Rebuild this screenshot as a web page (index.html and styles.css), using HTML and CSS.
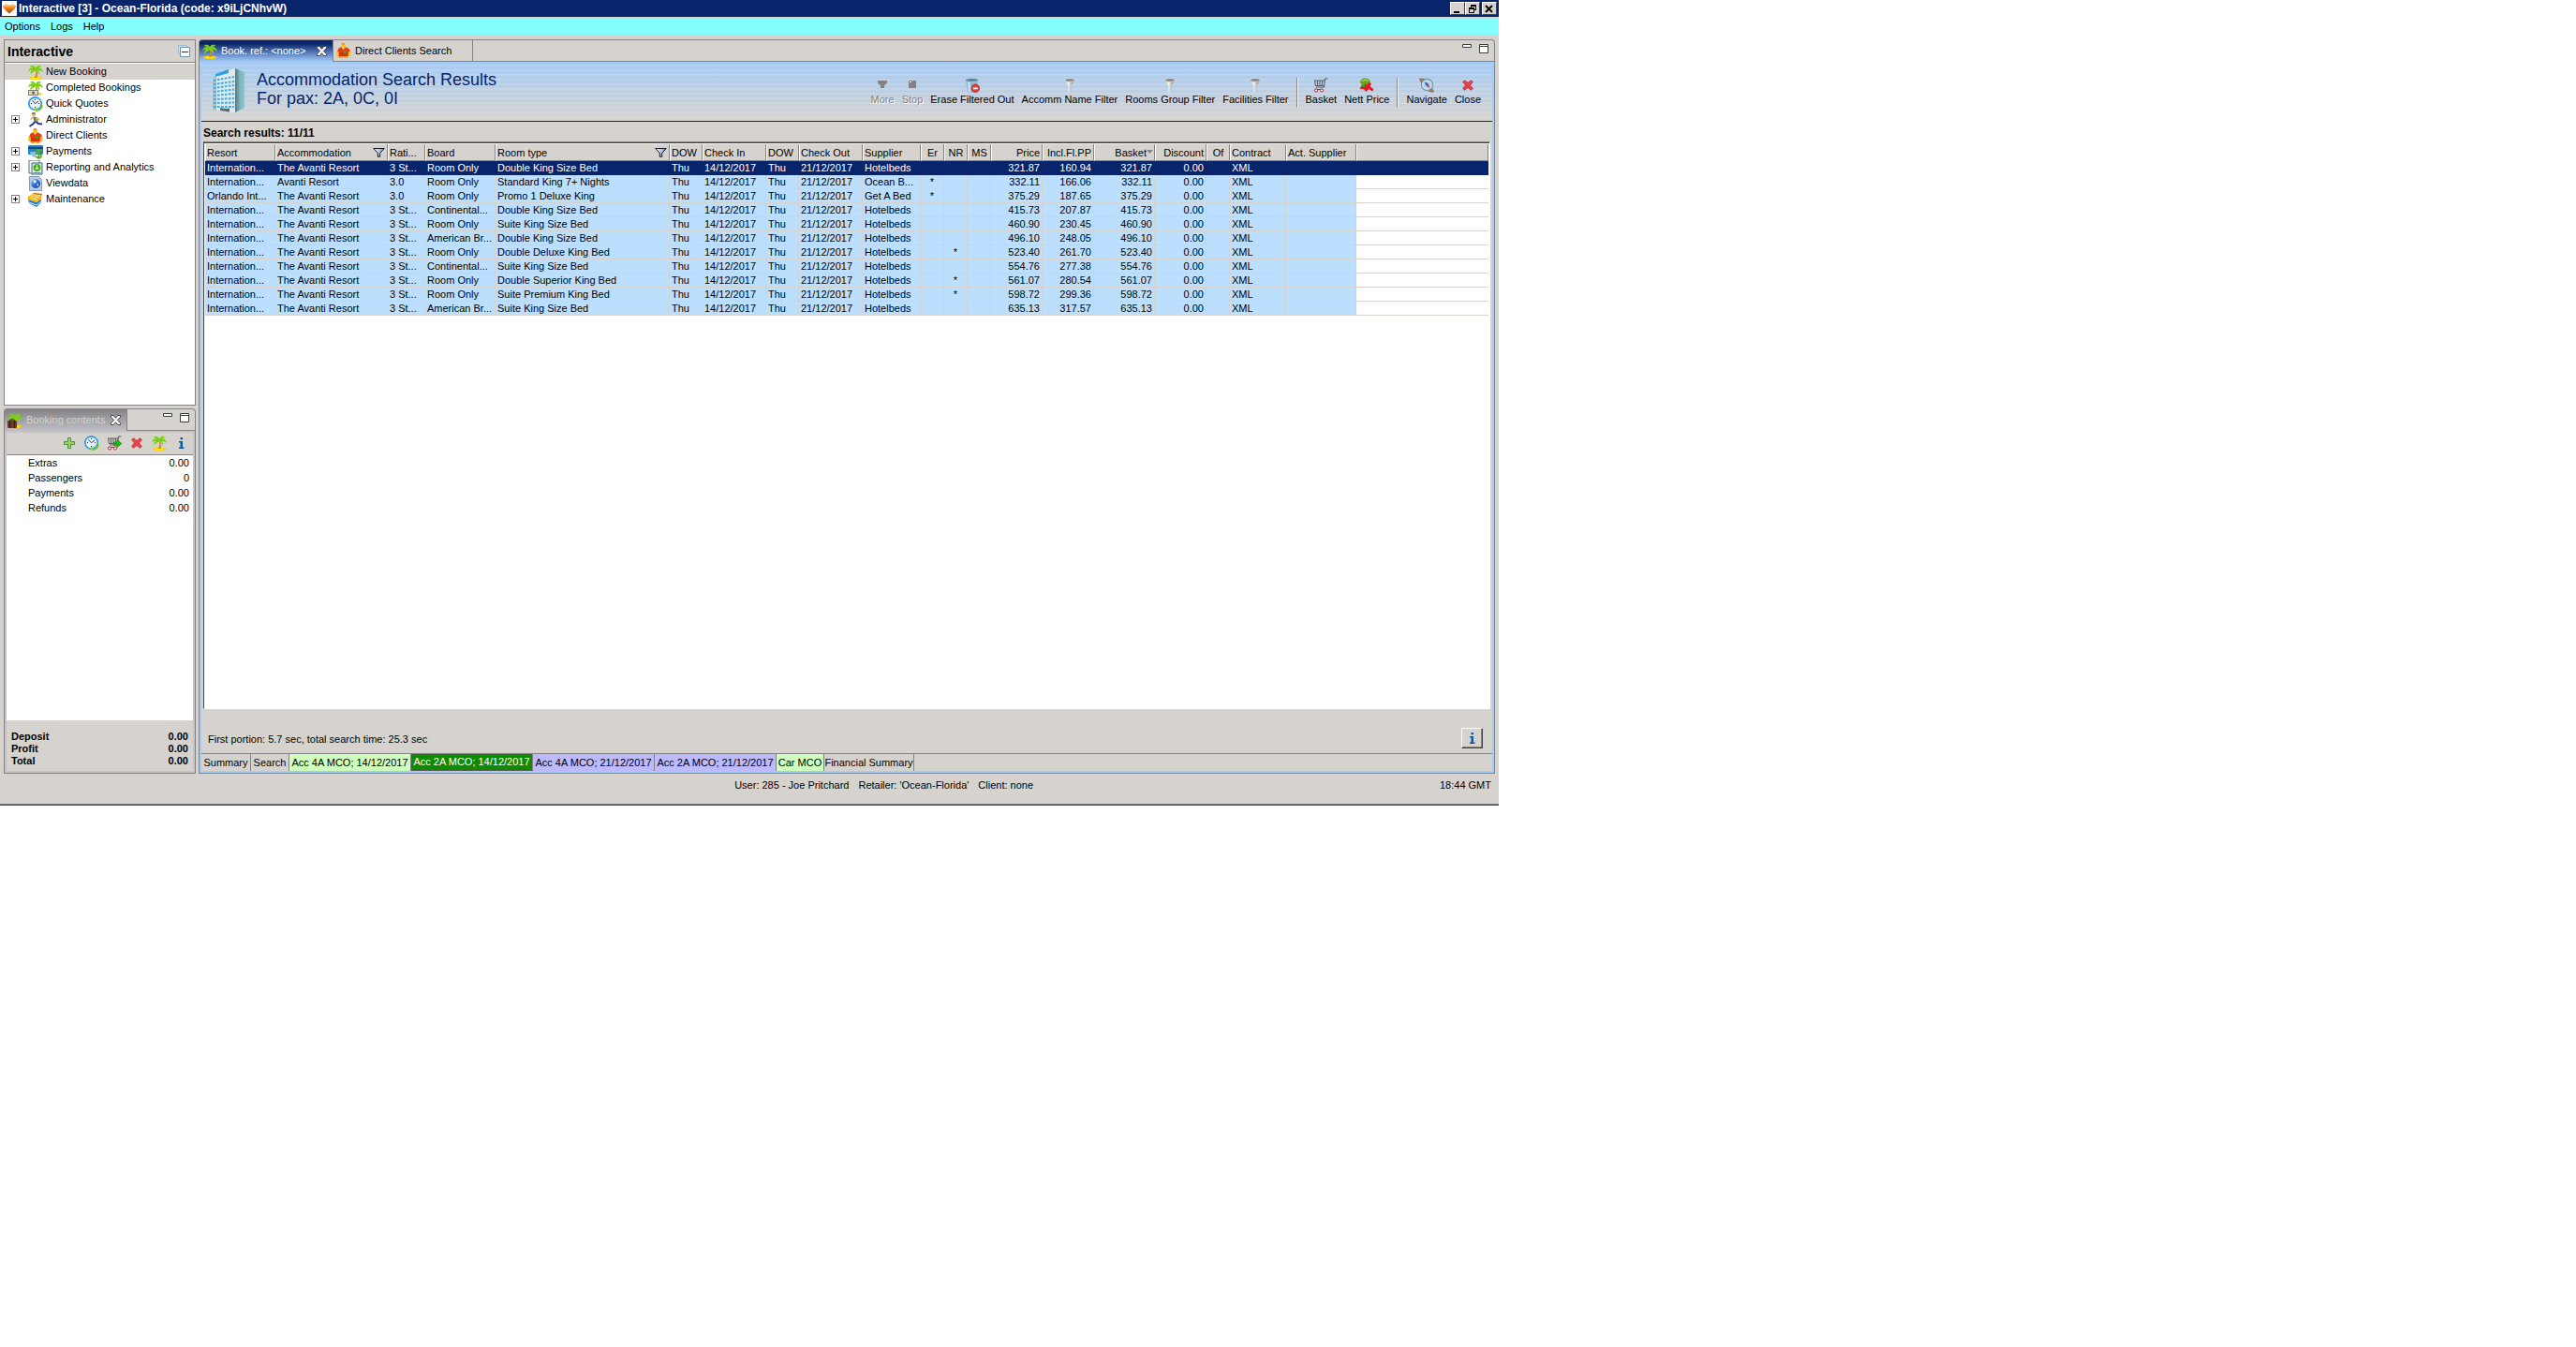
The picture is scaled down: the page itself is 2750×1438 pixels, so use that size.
FILE: index.html
```html
<!DOCTYPE html>
<html lang="en">
<head>
<meta charset="utf-8">
<title>Interactive [3] - Ocean-Florida</title>
<link rel="stylesheet" href="styles.css">
</head>
<body>
<svg class="defs" aria-hidden="true">
  <defs>
    <linearGradient id="gFunnel" x1="0" x2="1" y1="0" y2="0"><stop offset="0" stop-color="#b4b4b4"/><stop offset=".35" stop-color="#f6f6f6"/><stop offset="1" stop-color="#6b6b6b"/></linearGradient>
    <linearGradient id="gSide" x1="0" x2="1" y1="0" y2="0"><stop offset="0" stop-color="#4f7680"/><stop offset=".5" stop-color="#7fb4bd"/><stop offset="1" stop-color="#8fc4cc"/></linearGradient>
    <linearGradient id="gHead" x1="0" x2="1" y1="0" y2="0"><stop offset="0" stop-color="#fff"/><stop offset="1" stop-color="#6f8fc8"/></linearGradient>
    <linearGradient id="gHeart" x1="0" x2="0" y1="0" y2="1"><stop offset="0" stop-color="#ffd9a0"/><stop offset=".4" stop-color="#f08a1c"/><stop offset="1" stop-color="#a83c10"/></linearGradient>
    <linearGradient id="gGlobe" x1="0" x2="1" y1="0" y2="1"><stop offset="0" stop-color="#9ccdf8"/><stop offset=".5" stop-color="#2f6fd8"/><stop offset="1" stop-color="#0b2f8c"/></linearGradient>
  </defs>
  <symbol id="palm" viewBox="0 0 16 16">
    <ellipse cx="8" cy="14.200" rx="7" ry="1.800" fill="#f8d400"/><path d="M4 14h8v1H4z" fill="#ffee3a"/>
    <path d="M7.500 5c1 3 1 6-.5 9h2.500c.8-3 .4-6-.5-9z" fill="#c8901c"/>
    <path d="M8 3.500C6.500 0 3 0 1.500 2.500c2-.5 3-.2 3.500.8C2.500 3 .5 4.500 0 7.500c1.500-1.500 3-2 4-1.500C2.500 7 2 8.500 2.500 10.500 4 8.500 6 7 7.500 6.500c2 .5 3.500 2 4 4.500 1-2 .5-3.500-.5-5 1.500-.2 3.500.5 5 2C15.500 5 13.500 3.300 11 3.300c.8-1 2-1.300 3.500-.8C13 0 9.500 0 8 3.500z" fill="#86d81c"/>
    <path d="M7.500 4.500C6 3 4.500 2 3 2M7 5.200C5 4.400 3 4.800 1.200 6.200M9 4.500c1-1.500 2-2.200 4-2.500M9 5.200c2-.5 4 0 5.500 1.500M7.500 5.500L3.500 8.500" stroke="#4fa614" fill="none" stroke-width=".5"/>
  </symbol>
  <symbol id="palmcash" viewBox="0 0 16 16">
    <use href="#palm"/><rect x="0" y="10" width="11" height="6" fill="#7d8071"/><rect x="1" y="11" width="9" height="4" fill="#d8d8c4"/><circle cx="5.500" cy="13" r="1.600" fill="#63665a"/>
  </symbol>
  <symbol id="palmcase" viewBox="0 0 16 16">
    <use href="#palm"/><path d="M3 8.500V7h4v1.500" fill="none" stroke="#3b1d12"/><rect y="8" width="10" height="8" rx="1" fill="#6a3a28"/><rect x="2" y="8" width="1" height="8" fill="#341a10"/><rect x="7" y="8" width="1" height="8" fill="#341a10"/>
  </symbol>
  <symbol id="clock" viewBox="0 0 16 16">
    <circle cx="7.500" cy="7.500" r="6.700" fill="#e6f1f8" stroke="#2f9ae8" stroke-width="1.700"/><path d="M7.500 3v1M7.500 11v1M3 7.500h1M11 7.500h1M4.500 4.500l3 3.200L11 5" stroke="#333" fill="none"/>
    <path d="M7 15c4 0 7-2 7-6l1.700.3C16 13 12.500 16 8.500 16z" fill="#6cc218"/><path d="M6 14l3.500-3v5z" fill="#8ad42c"/>
  </symbol>
  <symbol id="runner" viewBox="0 0 16 16">
    <circle cx="6" cy="2.300" r="2" fill="#e8ba60"/><path d="M4 1.500C4 0 7.500-.2 8 1.500z" fill="#4a3a24"/><path d="M5 4.500l4 .5 1 5-3 1z" fill="#53688e"/><path d="M7.500 4.500L11 6l-.5 4-2.500-.5z" fill="#a1ae2d"/><path d="M5.500 5L2.500 7.500M9 6l3.500 2" stroke="#e0b060" stroke-width="1.400"/>
    <path d="M7.500 10L5 12.500 1.500 15M8.500 10l2.500 2 4 .5" stroke="#27368e" stroke-width="2" fill="none"/>
  </symbol>
  <symbol id="client" viewBox="0 0 16 16">
    <circle cx="7.500" cy="2.500" r="2.500" fill="#fbc81c"/><path d="M5.500 1.500h4L8.500 0h-2z" fill="#e8801c"/>
    <path d="M4 4.500h7l3 2 1 3v4H1v-4l1-3z" fill="#ee3a0c"/><path d="M2.500 9.500v5h10v-5z" fill="#e02c08"/>
    <path d="M0 9.500l2.500-.5.5 4-1.500 1L0 12.500zM15.500 9.500L13 9l-.5 4 1.500 1 1.500-1.500z" fill="#fbc41c"/><path d="M5.500 4.500L7.500 7l2-2.500z" fill="#ffe36b"/><path d="M7.500 8.500h3.500v2.500H7.500z" fill="#2fa82a"/><path d="M3 14h4v2H3zM8.500 14h4v2h-4z" fill="#f6a516"/>
  </symbol>
  <symbol id="card" viewBox="0 0 16 16">
    <rect y="1" width="16" height="10" rx="1" fill="#2185cd"/><rect y="3" width="16" height="2" fill="#10486f"/><path d="M2 8h6v5l-2 1-3-3z" fill="#8cc0e4"/><path d="M14 7.500C13 5.500 8.500 6 9 8.500S14 10 14 12.500 9 15 8 12.500M11.300 5v11" fill="none" stroke="#5daa16" stroke-width="1.800"/>
  </symbol>
  <symbol id="report" viewBox="0 0 16 16">
    <path d="M1 0h11v14H1z" fill="#f6fafc" stroke="#4c7389"/><path d="M4 3h11v12H4z" fill="#e0eef4" stroke="#37647e"/><circle cx="9.500" cy="8" r="4" fill="#4cae20"/><path d="M9.500 5v4M8 8l1.500 2L11 8" stroke="#fff" fill="none"/><path d="M5.500 13.500h8" stroke="#6b8797"/>
  </symbol>
  <symbol id="view" viewBox="0 0 16 16">
    <path d="M1.500.5h10l3 3v12h-13z" fill="#b6cbe4" stroke="#8a99b0"/><circle cx="8" cy="8" r="5" fill="url(#gGlobe)"/><path d="M5 5l3-1 1 2-2 2zM9 9l2-1v3z" fill="#e4f2ff"/>
  </symbol>
  <symbol id="books" viewBox="0 0 16 16">
    <path d="M0 8l9 3 5-4v4l-5 5-8-4z" fill="#1d7bc7"/><path d="M1 11l8 3 5-4" stroke="#d8efff" fill="none"/><path d="M0 5l6-4 9 1-1 6-5 3-9-3z" fill="#f6b21c"/><path d="M3 4l9 2M5 2.500l8 1.500M2 6l8 2.500" stroke="#fff0a0" fill="none"/><path d="M6 1l9 1-.4 1L5 2z" fill="#a86c10"/>
  </symbol>
  <symbol id="plus" viewBox="0 0 12 12"><path d="M4.500.5h3v4h4v3h-4v4h-3v-4h-4v-3h4z" fill="#9fcf62" stroke="#4a9246"/></symbol>
  <symbol id="cart" viewBox="0 0 16 16">
    <path d="M15.500 1h-3l-1 9H3M1 3h11M1.500 3l1 5.500H12M4.500 3v5M7 3v5M9.500 3v5" fill="none" stroke="#5d5f61" stroke-width="1.100"/><circle cx="3" cy="13.500" r="1.600" fill="#fff" stroke="#e81020"/><circle cx="9" cy="13.500" r="1.600" fill="#fff" stroke="#e81020"/><path d="M4 12.500h4" stroke="#e81020"/>
  </symbol>
  <symbol id="cartgo" viewBox="0 0 16 16"><use href="#cart"/><path d="M7.500 7H11V4.500L15.800 8.500 11 12.500V10H7.500z" fill="#12c21a" stroke="#067e0a" stroke-width=".7"/></symbol>
  <symbol id="redx" viewBox="0 0 12 12"><path d="M.7 2.500L2.500.7 6 3.500 9.500.7l1.800 1.800L8.500 6l2.800 3.500-1.800 1.800L6 8.500l-3.500 2.800L.7 9.500 3.500 6z" fill="#e8414b" stroke="#c42b35" stroke-width=".8"/></symbol>
  <symbol id="tabx" viewBox="0 0 11 11"><path d="M.5.5h2.700l2.300 2.800L7.800.5h2.700v1.700L7.400 5.500l3.100 3.300v1.700H7.800L5.500 7.700 3.200 10.500H.5V8.800l3.100-3.300L.5 2.200z" fill="#fff" stroke="#444"/></symbol>
  <symbol id="info" viewBox="0 0 8 12"><path d="M2.500 0H5v2.200H2.500zM1 4h4v6.500h1.500V12H1v-1.500h1.500V5.500H1z" fill="#0a5aa4"/></symbol>
  <symbol id="funnel" viewBox="0 0 16 16"><path d="M2.500 2.500L6.500 8.500v7l3-1.500V8.500l4-6z" fill="url(#gFunnel)"/><ellipse cx="8" cy="2.500" rx="5.500" ry="2" fill="#8b8b8b" stroke="#e4e4e4" stroke-width=".8"/></symbol>
  <symbol id="hfunnel" viewBox="0 0 13 10"><path d="M.8.500h11.400L7.700 5.500v3.800H5.300V5.500z" fill="url(#gHead)" stroke="#10151f"/></symbol>
  <symbol id="bin" viewBox="0 0 16 16"><path d="M1 2.500h13l-1 13H3z" fill="#8fb9d2"/><path d="M3 4l1 11h2L5.500 4z" fill="#cfe5f0"/><ellipse cx="7.500" cy="2.500" rx="7" ry="2" fill="#5d8199" stroke="#a9cde0"/><circle cx="11.300" cy="11.300" r="4.300" fill="#df3a3f" stroke="#b01f26" stroke-width=".7"/><path d="M8.800 10.500h5v1.800h-5z" fill="#fff"/></symbol>
  <symbol id="nett" viewBox="0 0 16 16"><ellipse cx="6.500" cy="4.500" rx="5.500" ry="4" fill="#6aa51e"/><path d="M3 4c1.500-2 5-2 6.500-.5" stroke="#c4e48a" fill="none"/><path d="M2 8h8v3H2z" fill="#4b8a12"/><path d="M5.500 5.500L8 8l3-3 2 1.500L11.500 9l4 3.500-1.500 2-3.500-2.500L7 15l-2-3H1v-2h5.500z" fill="#ee1226"/></symbol>
  <symbol id="compass" viewBox="0 0 16 16"><path d="M.5 1l5 .5-3 4zM15.500 15l-5-.5 3-3.500z" fill="#b0843c" stroke="#5b4520" stroke-width=".6"/><circle cx="8.500" cy="7.500" r="6" fill="#dcecf8" stroke="#7e96a8" stroke-width="1.400"/><circle cx="8.500" cy="7.500" r="4" fill="#9cd4f4"/><path d="M5.500 4l4 2.500L8 8.500z" fill="#1450b0"/><path d="M11.500 11l-4-2.500L9.500 6.500z" fill="#d82828"/></symbol>
  <symbol id="hotel" viewBox="0 0 34 48">
    <path d="M24 0l10 4v38l-10 5z" fill="url(#gSide)"/><path d="M24 0L4 6 0 11v33l24 3z" fill="#dfe8ea"/><path d="M0 11L4 6v39l-4-.5z" fill="#b3c1c6"/><path d="M3 6l14-5v4L3 9z" fill="#27a4e4"/>
    <path d="M1 13l22-4M1 17l22-3M1 21l22-3M1 25l22-2.500M1 29l22-2M1 33l22-1M1 37l22-.5M1 41h22" stroke="#3fa9dc" stroke-width="2" stroke-dasharray="2.600 1.400"/>
    <path d="M8 42l6 1 4-.5v4L8 45z" fill="#5d6a70"/>
  </symbol>
  <symbol id="logo" viewBox="0 0 16 16"><rect width="16" height="16" fill="#fff"/><path d="M1 5.500L4 3l4 1.500L12 3l3 2.500c0 2-2 4-7 8-5-4-7-6-7-8z" fill="url(#gHeart)"/></symbol>
  <symbol id="minw" viewBox="0 0 10 4"><path d="M.5.500h9v3h-9z" fill="#fff" stroke="#3c3c3c"/></symbol>
  <symbol id="maxw" viewBox="0 0 10 10"><path d="M.5.500h9v9h-9zM.5 2.500h9" fill="#fff" stroke="#3c3c3c"/></symbol>
</svg>

<div class="app">
  <header class="titlebar">
    <svg class="i16"><use href="#logo"/></svg>
    <h1>Interactive [3] - Ocean-Florida (code: x9iLjCNhvW)</h1>
    <div class="winbtns">
      <button aria-label="Minimise"><svg viewBox="0 0 10 9"><path d="M1 7h6v2H1z"/></svg></button>
      <button aria-label="Restore"><svg viewBox="0 0 10 9"><path d="M3 0h6v6H7V5h1V2H4v1H3zM1 3h6v6H1zM2 5v3h4V5z" fill-rule="evenodd"/></svg></button>
      <button class="closew" aria-label="Close window"><svg viewBox="0 0 10 9"><path d="M1 1l7 7M8 1L1 8" stroke="#000" stroke-width="2"/></svg></button>
    </div>
  </header>
  <nav class="menubar"><button>Options</button><button>Logs</button><button>Help</button></nav>

  <div class="workspace">
    <aside class="side">
      <section class="nav">
        <div class="navhead"><h2>Interactive</h2><button aria-label="Collapse all"><svg viewBox="0 0 13 13"><path d="M.5.500h9v9h-9z" fill="#d9e6f2" stroke="#9db8cf"/><path d="M2.500 2.500h10v10h-10z" fill="#fff" stroke="#7390a8"/><path d="M4 7h7v1H4z" fill="#0a3c78"/></svg></button></div>
        <ul class="tree">
          <li class="on"><span></span><svg class="i16"><use href="#palm"/></svg><a href="#new">New Booking</a></li>
          <li><span></span><svg class="i16"><use href="#palmcash"/></svg><a href="#completed">Completed Bookings</a></li>
          <li><span></span><svg class="i16"><use href="#clock"/></svg><a href="#quotes">Quick Quotes</a></li>
          <li><button class="exp" aria-label="Expand Administrator"></button><svg class="i16"><use href="#runner"/></svg><a href="#admin">Administrator</a></li>
          <li><span></span><svg class="i16"><use href="#client"/></svg><a href="#clients">Direct Clients</a></li>
          <li><button class="exp" aria-label="Expand Payments"></button><svg class="i16"><use href="#card"/></svg><a href="#payments">Payments</a></li>
          <li><button class="exp" aria-label="Expand Reporting"></button><svg class="i16"><use href="#report"/></svg><a href="#reports">Reporting and Analytics</a></li>
          <li><span></span><svg class="i16"><use href="#view"/></svg><a href="#viewdata">Viewdata</a></li>
          <li><button class="exp" aria-label="Expand Maintenance"></button><svg class="i16"><use href="#books"/></svg><a href="#maintenance">Maintenance</a></li>
        </ul>
      </section>

      <section class="booking">
        <div class="tabrow">
          <div class="tab on"><svg class="i16"><use href="#palmcase"/></svg><span>Booking contents</span><button aria-label="Close tab"><svg class="i11"><use href="#tabx"/></svg></button></div>
          <div class="tabrest"><button aria-label="Minimise panel"><svg class="minw"><use href="#minw"/></svg></button><button aria-label="Maximise panel"><svg class="maxw"><use href="#maxw"/></svg></button></div>
        </div>
        <div class="frame">
          <div class="tools">
            <button aria-label="Add"><svg class="i12"><use href="#plus"/></svg></button>
            <button aria-label="Quote"><svg class="i16"><use href="#clock"/></svg></button>
            <button aria-label="To basket"><svg class="i16"><use href="#cartgo"/></svg></button>
            <button aria-label="Delete"><svg class="i12"><use href="#redx"/></svg></button>
            <button aria-label="New booking"><svg class="i16"><use href="#palm"/></svg></button>
            <button aria-label="Information"><svg class="info"><use href="#info"/></svg></button>
          </div>
          <dl class="contents">
            <div><dt>Extras</dt><dd>0.00</dd></div>
            <div><dt>Passengers</dt><dd>0</dd></div>
            <div><dt>Payments</dt><dd>0.00</dd></div>
            <div><dt>Refunds</dt><dd>0.00</dd></div>
          </dl>
          <dl class="totals">
            <div><dt>Deposit</dt><dd>0.00</dd></div>
            <div><dt>Profit</dt><dd>0.00</dd></div>
            <div><dt>Total</dt><dd>0.00</dd></div>
          </dl>
        </div>
      </section>
    </aside>

    <main class="editor">
      <div class="tabrow">
        <div class="tab on"><svg class="i16"><use href="#palm"/></svg><span>Book. ref.: &lt;none&gt;</span><button aria-label="Close tab"><svg class="i11"><use href="#tabx"/></svg></button></div>
        <div class="tab second"><svg class="i16"><use href="#client"/></svg><span>Direct Clients Search</span></div>
        <div class="tabrest"><button aria-label="Minimise editor"><svg class="minw"><use href="#minw"/></svg></button><button aria-label="Maximise editor"><svg class="maxw"><use href="#maxw"/></svg></button></div>
      </div>
      <div class="frame">
        <div class="banner">
          <svg class="hotel"><use href="#hotel"/></svg>
          <h2>Accommodation Search Results<br>For pax: 2A, 0C, 0I</h2>
          <div class="actions">
            <button disabled><svg class="i16" viewBox="0 0 16 16"><path d="M3 3h10v3l-3 2v3H6V8L3 6z" fill="#848284"/></svg>More</button>
            <button disabled><svg class="i16" viewBox="0 0 16 16"><path d="M4 3h8v8H4z" fill="#848284"/><path d="M5 4h2v1H5z" fill="#fff"/></svg>Stop</button>
            <button><svg class="i16"><use href="#bin"/></svg>Erase Filtered Out</button>
            <button><svg class="i16"><use href="#funnel"/></svg>Accomm Name Filter</button>
            <button><svg class="i16"><use href="#funnel"/></svg>Rooms Group Filter</button>
            <button><svg class="i16"><use href="#funnel"/></svg>Facilities Filter</button>
            <i></i>
            <button><svg class="i16"><use href="#cart"/></svg>Basket</button>
            <button><svg class="i16"><use href="#nett"/></svg>Nett Price</button>
            <i></i>
            <button><svg class="i16"><use href="#compass"/></svg>Navigate</button>
            <button><svg class="i16" viewBox="-2 -2 16 16"><use href="#redx" width="12" height="12"/></svg>Close</button>
          </div>
        </div>
        <h3 class="count">Search results: 11/11</h3>
        <div class="grid">
          <table>
            <colgroup><col class="w75"><col class="w120"><col class="w40"><col class="w75"><col class="w186"><col class="w35"><col class="w68"><col class="w35"><col class="w68"><col class="w62"><col class="w25"><col class="w25"><col class="w25"><col class="w55"><col class="w55"><col class="w65"><col class="w55"><col class="w25"><col class="w60"><col class="w75"><col></colgroup>
            <thead><tr><th>Resort</th><th><span class="filt">Accommodation<svg><use href="#hfunnel"/></svg></span></th><th>Rati...</th><th>Board</th><th><span class="filt">Room type<svg><use href="#hfunnel"/></svg></span></th><th>DOW</th><th>Check In</th><th>DOW</th><th>Check Out</th><th>Supplier</th><th class="c">Er</th><th class="c">NR</th><th class="c">MS</th><th class="r">Price</th><th class="r">Incl.Fl.PP</th><th class="r sort">Basket<svg viewBox="0 0 7 4"><path d="M0 0h7L3.500 4z" fill="#848284"/></svg></th><th class="r">Discount</th><th class="c">Of</th><th>Contract</th><th>Act. Supplier</th><th></th></tr></thead>
            <tbody>
              <tr class="sel"><td>Internation...</td><td>The Avanti Resort</td><td>3 St...</td><td>Room Only</td><td>Double King Size Bed</td><td>Thu</td><td>14/12/2017</td><td>Thu</td><td>21/12/2017</td><td>Hotelbeds</td><td class="c"></td><td class="c"></td><td></td><td class="r">321.87</td><td class="r">160.94</td><td class="r">321.87</td><td class="r">0.00</td><td></td><td>XML</td><td></td><td></td></tr>
              <tr><td>Internation...</td><td>Avanti Resort</td><td>3.0</td><td>Room Only</td><td>Standard King 7+ Nights</td><td>Thu</td><td>14/12/2017</td><td>Thu</td><td>21/12/2017</td><td>Ocean B...</td><td class="c">*</td><td class="c"></td><td></td><td class="r">332.11</td><td class="r">166.06</td><td class="r">332.11</td><td class="r">0.00</td><td></td><td>XML</td><td></td><td></td></tr>
              <tr><td>Orlando Int...</td><td>The Avanti Resort</td><td>3.0</td><td>Room Only</td><td>Promo 1 Deluxe King</td><td>Thu</td><td>14/12/2017</td><td>Thu</td><td>21/12/2017</td><td>Get A Bed</td><td class="c">*</td><td class="c"></td><td></td><td class="r">375.29</td><td class="r">187.65</td><td class="r">375.29</td><td class="r">0.00</td><td></td><td>XML</td><td></td><td></td></tr>
              <tr><td>Internation...</td><td>The Avanti Resort</td><td>3 St...</td><td>Continental...</td><td>Double King Size Bed</td><td>Thu</td><td>14/12/2017</td><td>Thu</td><td>21/12/2017</td><td>Hotelbeds</td><td class="c"></td><td class="c"></td><td></td><td class="r">415.73</td><td class="r">207.87</td><td class="r">415.73</td><td class="r">0.00</td><td></td><td>XML</td><td></td><td></td></tr>
              <tr><td>Internation...</td><td>The Avanti Resort</td><td>3 St...</td><td>Room Only</td><td>Suite King Size Bed</td><td>Thu</td><td>14/12/2017</td><td>Thu</td><td>21/12/2017</td><td>Hotelbeds</td><td class="c"></td><td class="c"></td><td></td><td class="r">460.90</td><td class="r">230.45</td><td class="r">460.90</td><td class="r">0.00</td><td></td><td>XML</td><td></td><td></td></tr>
              <tr><td>Internation...</td><td>The Avanti Resort</td><td>3 St...</td><td>American Br...</td><td>Double King Size Bed</td><td>Thu</td><td>14/12/2017</td><td>Thu</td><td>21/12/2017</td><td>Hotelbeds</td><td class="c"></td><td class="c"></td><td></td><td class="r">496.10</td><td class="r">248.05</td><td class="r">496.10</td><td class="r">0.00</td><td></td><td>XML</td><td></td><td></td></tr>
              <tr><td>Internation...</td><td>The Avanti Resort</td><td>3 St...</td><td>Room Only</td><td>Double Deluxe King Bed</td><td>Thu</td><td>14/12/2017</td><td>Thu</td><td>21/12/2017</td><td>Hotelbeds</td><td class="c"></td><td class="c">*</td><td></td><td class="r">523.40</td><td class="r">261.70</td><td class="r">523.40</td><td class="r">0.00</td><td></td><td>XML</td><td></td><td></td></tr>
              <tr><td>Internation...</td><td>The Avanti Resort</td><td>3 St...</td><td>Continental...</td><td>Suite King Size Bed</td><td>Thu</td><td>14/12/2017</td><td>Thu</td><td>21/12/2017</td><td>Hotelbeds</td><td class="c"></td><td class="c"></td><td></td><td class="r">554.76</td><td class="r">277.38</td><td class="r">554.76</td><td class="r">0.00</td><td></td><td>XML</td><td></td><td></td></tr>
              <tr><td>Internation...</td><td>The Avanti Resort</td><td>3 St...</td><td>Room Only</td><td>Double Superior King Bed</td><td>Thu</td><td>14/12/2017</td><td>Thu</td><td>21/12/2017</td><td>Hotelbeds</td><td class="c"></td><td class="c">*</td><td></td><td class="r">561.07</td><td class="r">280.54</td><td class="r">561.07</td><td class="r">0.00</td><td></td><td>XML</td><td></td><td></td></tr>
              <tr><td>Internation...</td><td>The Avanti Resort</td><td>3 St...</td><td>Room Only</td><td>Suite Premium King Bed</td><td>Thu</td><td>14/12/2017</td><td>Thu</td><td>21/12/2017</td><td>Hotelbeds</td><td class="c"></td><td class="c">*</td><td></td><td class="r">598.72</td><td class="r">299.36</td><td class="r">598.72</td><td class="r">0.00</td><td></td><td>XML</td><td></td><td></td></tr>
              <tr><td>Internation...</td><td>The Avanti Resort</td><td>3 St...</td><td>American Br...</td><td>Suite King Size Bed</td><td>Thu</td><td>14/12/2017</td><td>Thu</td><td>21/12/2017</td><td>Hotelbeds</td><td class="c"></td><td class="c"></td><td></td><td class="r">635.13</td><td class="r">317.57</td><td class="r">635.13</td><td class="r">0.00</td><td></td><td>XML</td><td></td><td></td></tr>
            </tbody>
          </table>
        </div>
        <div class="timing"><p>First portion: 5.7 sec, total search time: 25.3 sec</p><button aria-label="Information"><svg class="info"><use href="#info"/></svg></button></div>
        <div class="pages">
          <button class="p52">Summary</button><button class="p41">Search</button><button class="p130 lime">Acc 4A MCO; 14/12/2017</button><button class="p130 cur">Acc 2A MCO; 14/12/2017</button><button class="p130 lilac">Acc 4A MCO; 21/12/2017</button><button class="p130 lilac">Acc 2A MCO; 21/12/2017</button><button class="p51 lime">Car MCO</button><button class="p96">Financial Summary</button>
        </div>
      </div>
    </main>
  </div>
  <footer class="status"><span></span><p><span>User: 285 - Joe Pritchard</span><span>Retailer: 'Ocean-Florida'</span><span>Client: none</span></p><time>18:44 GMT</time></footer>
</div>
</body>
</html>
```
FILE: styles.css
```css
:root {
  --face: #d6d3ce;
  --navy: #08246b;
  --sky: #a5cbf7;
  --line: #848284;
}
* { box-sizing: border-box; }
body {
  margin: 0;
  background: #fff;
  color: #000;
  font: 11px/15px Tahoma, "Liberation Sans", sans-serif;
}
h1, h2, h3, p, dl, dd, ul { margin: 0; padding: 0; }
button {
  border: 0;
  padding: 0;
  background: none;
  color: inherit;
  font: inherit;
  white-space: nowrap;
}
svg { display: block; flex: none; }
a { color: inherit; text-decoration: none; }
.defs { position: absolute; width: 0; height: 0; }
.i16 { width: 16px; height: 16px; }
.i12 { width: 12px; height: 12px; }
.i11 { width: 11px; height: 11px; }
.info { width: 8px; height: 12px; }
.minw { width: 10px; height: 4px; }
.maxw { width: 10px; height: 10px; }

.app {
  display: flex;
  flex-direction: column;
  max-width: 1600px;
  min-height: 860px;
  background: var(--face);
  border-bottom: 1px solid #424142;
  box-shadow: inset 0 -1px var(--line);
}

.titlebar {
  display: flex;
  align-items: center;
  gap: 2px;
  height: 18px;
  padding: 0 2px;
  background: var(--navy);
  color: #fff;
}
.titlebar h1 { flex: 1; font-size: 12px; line-height: 18px; }
.winbtns { display: flex; }
.winbtns button {
  display: grid;
  place-items: center;
  width: 16px;
  height: 14px;
  background: var(--face);
  border: 1px solid;
  border-color: #fff #424142 #424142 #fff;
}
.winbtns .closew { margin-left: 2px; }
.winbtns svg { width: 10px; height: 9px; }

.menubar {
  display: flex;
  gap: 11px;
  height: 19px;
  padding: 0 5px;
  margin-bottom: 5px;
  background: #84ffff;
  border-top: 1px solid var(--face);
}

.workspace { display: flex; flex: 1; gap: 3px; padding: 0 4px; }
.side { display: flex; flex-direction: column; gap: 3px; width: 205px; flex: none; }

.nav { height: 391px; background: #fff; border: 1px solid var(--line); }
.navhead {
  display: flex;
  align-items: center;
  justify-content: space-between;
  height: 24px;
  padding: 0 5px 0 3px;
  background: var(--face);
  border-bottom: 1px solid var(--line);
}
.navhead h2 { font-size: 14px; line-height: 20px; }
.navhead svg { width: 13px; height: 13px; }
.tree { list-style: none; padding-top: 1px; }
.tree li {
  display: grid;
  grid-template-columns: 22px 16px 1fr;
  gap: 3px;
  align-items: center;
  height: 17px;
}
.tree .on { background: var(--face); }
.exp {
  width: 9px;
  height: 9px;
  margin-left: 7px;
  border: 1px solid var(--line);
  background:
    linear-gradient(#000, #000) center / 5px 1px no-repeat,
    linear-gradient(#000, #000) center / 1px 5px no-repeat,
    #fff;
}

.booking, .editor { display: flex; flex-direction: column; }
.booking { flex: 1; }
.editor { flex: 1; min-width: 0; }
.tabrow { display: flex; height: 24px; }
.tab {
  display: flex;
  align-items: center;
  gap: 4px;
  padding: 0 6px 0 3px;
  border: 1px solid var(--line);
  border-bottom: 0;
}
.tab.on { border-radius: 4px 0 0 0; color: #fff; }
.tab.on button { margin-left: auto; }
.tabrest {
  display: flex;
  flex: 1;
  justify-content: flex-end;
  gap: 8px;
  padding: 4px 6px 0 0;
  border: solid var(--line);
  border-width: 1px 1px 1px 0;
  border-radius: 0 4px 0 0;
}
.tabrest button { align-self: flex-start; }
.booking .tab {
  width: 132px;
  background: linear-gradient(#848284, #c0bfc6);
  color: var(--face);
}
.booking .frame {
  display: flex;
  flex-direction: column;
  flex: 1;
  border: 1px solid var(--line);
  border-top: 0;
  box-shadow: inset 0 0 0 2px #c3c3c9;
  padding: 2px;
}
.tools {
  display: flex;
  align-items: center;
  justify-content: flex-end;
  gap: 8px;
  height: 24px;
  padding: 0 4px 2px 0;
  border-bottom: 1px solid var(--line);
}
.tools button { display: grid; place-items: center; min-width: 16px; }
.contents { flex: 1; padding: 0 4px 0 23px; background: #fff; }
.contents div, .totals div { display: flex; justify-content: space-between; }
.contents div { line-height: 16px; }
.totals { padding: 11px 5px 4px; font-weight: bold; line-height: 13px; }

.editor .tab.on {
  width: 144px;
  background: linear-gradient(var(--navy), var(--navy) 15%, #7fa6de 80%, var(--sky));
}
.editor .second { width: 149px; border-left: 0; border-bottom: 1px solid var(--line); }
.editor .frame {
  display: flex;
  flex-direction: column;
  flex: 1;
  border: 1px solid var(--line);
  border-top: 0;
  box-shadow: inset 2px -2px var(--sky), inset -2px -2px var(--sky);
  padding: 0 2px 2px;
}
.banner {
  display: flex;
  align-items: flex-start;
  height: 64px;
  padding: 7px 12px 0 12px;
  background:
    repeating-linear-gradient(rgba(255, 255, 255, 0) 0 3px, rgba(255, 255, 255, .12) 3px 5px),
    linear-gradient(var(--sky), var(--face));
  border-bottom: 1px solid var(--navy);
  color: var(--navy);
}
.hotel { width: 34px; height: 48px; margin-right: 13px; }
.banner h2 { padding-top: 2px; font-size: 18px; font-weight: normal; line-height: 20px; white-space: nowrap; }
.actions { display: flex; gap: 8px; margin-left: auto; padding-top: 10px; color: #000; }
.actions button { display: flex; flex-direction: column; align-items: center; }
.actions button:disabled { color: var(--line); text-shadow: 1px 1px #fff; }
.actions i { width: 2px; height: 32px; border-left: 1px solid var(--line); background: #fff; }

.count { padding: 5px 2px 1px; font-size: 12px; line-height: 15px; }
.grid {
  flex: 1;
  margin: 0 2px;
  padding: 2px 1px 0;
  background: #fff;
  border: 1px solid;
  border-color: var(--line) #fff #fff #424142;
  box-shadow: inset 0 1px #424142;
}
table { width: 100%; table-layout: fixed; border-collapse: separate; border-spacing: 0; line-height: 14px; }
th, td { padding: 0 2px; overflow: hidden; text-align: left; white-space: nowrap; font-weight: normal; }
th {
  height: 18px;
  padding-left: 1px;
  background: var(--face);
  border: solid;
  border-width: 0 1px 1px;
  border-color: var(--line) var(--line) var(--line) #fff;
}
td { height: 15px; border: solid var(--face); border-width: 0 1px 1px 0; background: #bddfff; }
td:last-child { background: #fff; border-right: 0; }
.sel td, .sel td:last-child { background: var(--navy); border-color: var(--navy); color: #fff; }
.r { text-align: right; }
.c { text-align: center; padding: 0; }
th.sort { padding-right: 1px; }
.sort svg { display: inline-block; width: 7px; height: 4px; vertical-align: 3px; }
.filt { display: flex; justify-content: space-between; align-items: center; }
.filt svg { width: 13px; height: 10px; }
.w25 { width: 25px; } .w35 { width: 35px; } .w40 { width: 40px; } .w55 { width: 55px; }
.w60 { width: 60px; } .w62 { width: 62px; } .w65 { width: 65px; } .w68 { width: 68px; }
.w75 { width: 75px; } .w120 { width: 120px; } .w186 { width: 186px; }

.timing { display: flex; align-items: center; justify-content: space-between; height: 47px; padding: 17px 10px 0 7px; }
.timing button {
  display: grid;
  place-items: center;
  width: 23px;
  height: 22px;
  margin-bottom: 2px;
  border: 1px solid;
  border-color: #fff #424142 #424142 #fff;
  box-shadow: inset -1px -1px var(--line);
}
.pages { display: flex; height: 19px; border-top: 1px solid var(--line); }
.pages button { border-right: 1px solid var(--line); }
.pages .lime { background: #ceffbd; }
.pages .lilac { background: #bdbaff; }
.pages .cur { background: #108a00; color: #fff; border-bottom: 1px solid #5a5a5a; }
.p41 { width: 41px; } .p51 { width: 51px; } .p52 { width: 53px; } .p96 { width: 96px; } .p130 { width: 130px; }

.status {
  display: grid;
  grid-template-columns: 49% auto 1fr;
  padding: 5px 8px 13px;
}
.status p { display: flex; gap: 10px; }
.status time { text-align: right; }
```
